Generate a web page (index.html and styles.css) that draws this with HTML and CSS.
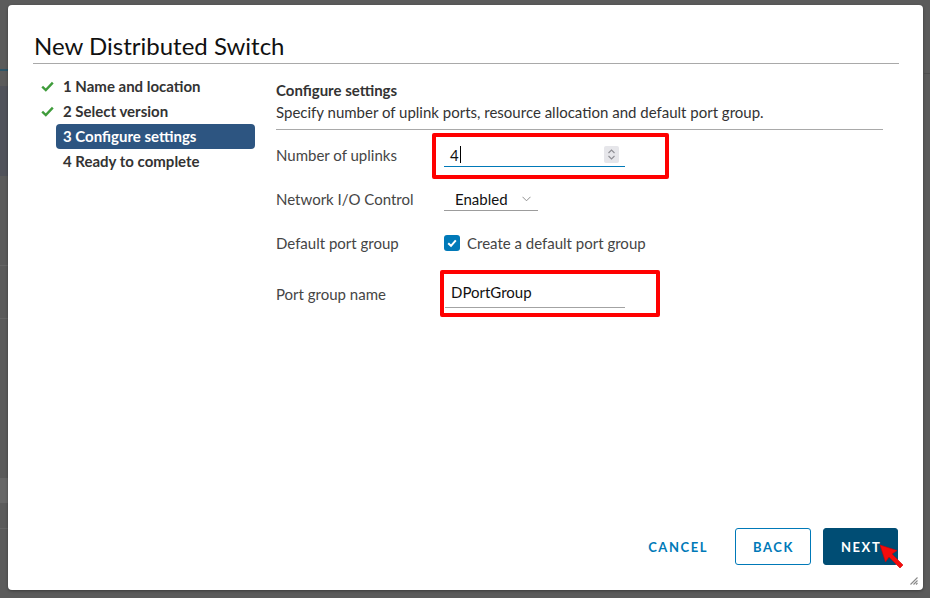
FILE: index.html
```html
<!DOCTYPE html>
<html lang="en">
<head>
<meta charset="utf-8">
<title>New Distributed Switch</title>
<link rel="stylesheet" href="styles.css">
</head>
<body>
<div class="backdrop">
  <div class="dialog">
    <div class="dialog-header">
      <h1 class="dialog-title">New Distributed Switch</h1>
    </div>
    <div class="dialog-body">
      <ul class="steps">
        <li class="step">
          <span class="step-icon"><svg width="13" height="11" viewBox="0 0 13 11"><path d="M1.2 5.6 L4.8 9 L11.8 1.6" fill="none" stroke="#3f9c3b" stroke-width="2.4"/></svg></span>
          <span class="step-label">1 Name and location</span>
        </li>
        <li class="step">
          <span class="step-icon"><svg width="13" height="11" viewBox="0 0 13 11"><path d="M1.2 5.6 L4.8 9 L11.8 1.6" fill="none" stroke="#3f9c3b" stroke-width="2.4"/></svg></span>
          <span class="step-label">2 Select version</span>
        </li>
        <li class="step">
          <span class="step-icon"></span>
          <span class="step-label active">3 Configure settings</span>
        </li>
        <li class="step">
          <span class="step-icon"></span>
          <span class="step-label">4 Ready to complete</span>
        </li>
      </ul>
      <div class="page">
        <div class="page-head">
          <h2 class="page-title">Configure settings</h2>
          <p class="page-desc">Specify number of uplink ports, resource allocation and default port group.</p>
        </div>
        <div class="form">
          <div class="row">
            <span class="label">Number of uplinks</span>
            <div class="control">
              <div class="input input-num">
                <span class="value">4</span><span class="caret"></span>
                <span class="spinner">
                  <svg width="15" height="17" viewBox="0 0 15 17"><path d="M4.5 7 L7.5 4 L10.5 7 M4.5 10 L7.5 13 L10.5 10" fill="none" stroke="#8e8e94" stroke-width="1.1"/></svg>
                </span>
              </div>
              <span class="annot annot-uplinks"></span>
            </div>
          </div>
          <div class="row">
            <span class="label">Network I/O Control</span>
            <div class="control">
              <div class="select">
                <span class="value">Enabled</span>
                <svg class="chev" width="9" height="6" viewBox="0 0 9 6"><path d="M0.5 0.8 L4.5 4.8 L8.5 0.8" fill="none" stroke="#8f8f8f" stroke-width="1"/></svg>
              </div>
            </div>
          </div>
          <div class="row">
            <span class="label">Default port group</span>
            <div class="control">
              <span class="checkbox"><svg width="16" height="16" viewBox="0 0 16 16"><path d="M4.2 8.2 L7 10.8 L11.8 5.4" fill="none" stroke="#fff" stroke-width="2"/></svg></span>
              <span class="check-text">Create a default port group</span>
            </div>
          </div>
          <div class="row row-name">
            <span class="label">Port group name</span>
            <div class="control">
              <div class="input input-name"><span class="value">DPortGroup</span></div>
              <span class="annot annot-name"></span>
            </div>
          </div>
        </div>
      </div>
    </div>
    <div class="dialog-footer">
      <button class="btn btn-flat">CANCEL</button>
      <button class="btn btn-outline">BACK</button>
      <button class="btn btn-primary">NEXT</button>
    </div>
    <svg class="grip" width="9" height="9" viewBox="0 0 9 9"><path d="M8.5 1.5 L1.5 8.5 M8.5 4.5 L4.5 8.5 M8.5 7 L7 8.5" stroke="#8a8a8a" stroke-width="1.1"/></svg>
  </div>
  <svg class="cursor" width="28" height="28" viewBox="0 0 28 28"><path d="M1 1 L18 6.5 L13 10 L24 21 L21 24 L10 13 L6.5 18 Z" fill="#f50c0c" stroke="#d00000" stroke-width="0.6"/></svg>
</div>
</body>
</html>
```
FILE: styles.css
```css
* { box-sizing: border-box; }

html, body {
  margin: 0;
  padding: 0;
}

body {
  font-family: Lato, "Noto Sans", "DejaVu Sans", sans-serif;
  background: #5b5b5b;
}

.backdrop {
  position: relative;
  width: 930px;
  height: 598px;
  padding: 5px 0 0 8px;
  background-color: #5b5b5b;
  background-image:
    linear-gradient(#2c5568, #2c5568),
    linear-gradient(#50525a, #50525a),
    linear-gradient(#666, #666),
    linear-gradient(#666, #666),
    linear-gradient(#676767, #676767),
    linear-gradient(#666, #666),
    linear-gradient(#4e4e4e, #4e4e4e);
  background-size: 8px 2px, 8px 90px, 8px 1px, 8px 1px, 8px 25px, 8px 1px, 8px 1px;
  background-position: 0 69px, 0 86px, 0 265px, 0 318px, 0 478px, 0 528px, 924px 73px;
  background-repeat: no-repeat;
  overflow: hidden;
}

.dialog {
  position: relative;
  width: 915px;
  height: 585px;
  background: #fff;
  border-radius: 4px;
  padding: 0 24px 0 25px;
  display: flex;
  flex-direction: column;
  box-shadow: 0 1px 3px rgba(0, 0, 0, 0.35);
}

.dialog-header {
  padding-top: 24px;
  border-bottom: 1px solid #a9a9a9;
}

.dialog-title {
  margin: 0;
  padding-left: 1px;
  font-size: 24px;
  line-height: 34px;
  font-weight: 400;
  color: #111;
}

.dialog-body {
  flex: 1;
  display: flex;
  padding-top: 11px;
  gap: 21px;
}

.steps {
  list-style: none;
  margin: -1px 0 0;
  padding: 0;
  width: 222px;
}

.step {
  display: flex;
  align-items: center;
  height: 25px;
}

.step-icon {
  width: 23px;
  display: flex;
  justify-content: flex-start;
  padding-left: 8px;
}

.step-label {
  flex: 1;
  height: 25px;
  line-height: 25px;
  padding-left: 7px;
  font-size: 15px;
  font-weight: 700;
  color: #333;
  border-radius: 4px;
}

.step-label.active {
  background: #2d5581;
  color: #fff;
}

.page {
  width: 607px;
  padding-top: 5px;
}

.page-head {
  border-bottom: 1px solid #a9a9a9;
  padding-bottom: 7px;
}

.page-title {
  margin: 0;
  font-size: 15px;
  line-height: 20px;
  font-weight: 700;
  color: #333;
}

.page-desc {
  margin: 2px 0 0;
  font-size: 15px;
  line-height: 20px;
  color: #333;
}

.form {
  padding-top: 13px;
  display: flex;
  flex-direction: column;
  gap: 20px;
}

.row {
  display: flex;
  align-items: center;
  height: 24px;
}

.row-name {
  margin-top: 5px;
  height: 28px;
}

.label {
  width: 168px;
  font-size: 15px;
  color: #454545;
}

.control {
  position: relative;
  display: flex;
  align-items: center;
  height: 100%;
}

.input {
  display: flex;
  align-items: center;
  height: 100%;
  padding-left: 6px;
  font-size: 15px;
  color: #111;
}

.input-num {
  width: 181px;
  border-bottom: 1px solid #0079b8;
}

.caret {
  display: inline-block;
  width: 1px;
  height: 17px;
  background: #000;
  margin-left: 1px;
}

.spinner {
  margin-left: auto;
  margin-right: 6px;
  width: 15px;
  height: 17px;
  background: #e6e6ea;
  border-radius: 2px;
  display: flex;
}

.input-name {
  width: 180px;
  margin-left: 1px;
  padding-bottom: 4px;
  border-bottom: 1px solid #a3a3a3;
}

.select {
  display: flex;
  align-items: center;
  width: 94px;
  height: 100%;
  padding-left: 11px;
  border-bottom: 1px solid #9c9c9c;
  font-size: 15px;
  color: #111;
}

.chev {
  margin-left: auto;
  margin-right: 7px;
}

.checkbox {
  width: 16px;
  height: 16px;
  border-radius: 3px;
  background: #0079b8;
  display: flex;
}

.check-text {
  margin-left: 7px;
  font-size: 15px;
  color: #454545;
}

.annot {
  position: absolute;
  border: 4px solid #ff0000;
  border-radius: 2px;
  pointer-events: none;
}

.annot-uplinks {
  left: -12px;
  top: -10px;
  width: 237px;
  height: 46px;
}

.annot-name {
  left: -4px;
  top: -10px;
  width: 220px;
  height: 47px;
}

.dialog-footer {
  display: flex;
  justify-content: flex-end;
  align-items: center;
  gap: 12px;
  padding-bottom: 25px;
  padding-right: 1px;
}

.btn {
  height: 37px;
  font-family: Lato, "Noto Sans", sans-serif;
  font-size: 13px;
  font-weight: 700;
  letter-spacing: 0.12em;
  border-radius: 3px;
  border: 1px solid transparent;
  background: transparent;
  padding: 0 17px;
  cursor: pointer;
}

.btn-flat {
  color: #0079b8;
  padding: 0 14px;
}

.btn-outline {
  width: 76px;
  color: #0079b8;
  border-color: #0079b8;
}

.btn-primary {
  width: 75px;
  color: #fff;
  background: #004d74;
  border-color: #004d74;
}

.grip {
  position: absolute;
  right: 5px;
  bottom: 5px;
}

.cursor {
  position: absolute;
  left: 879px;
  top: 544px;
}
```
